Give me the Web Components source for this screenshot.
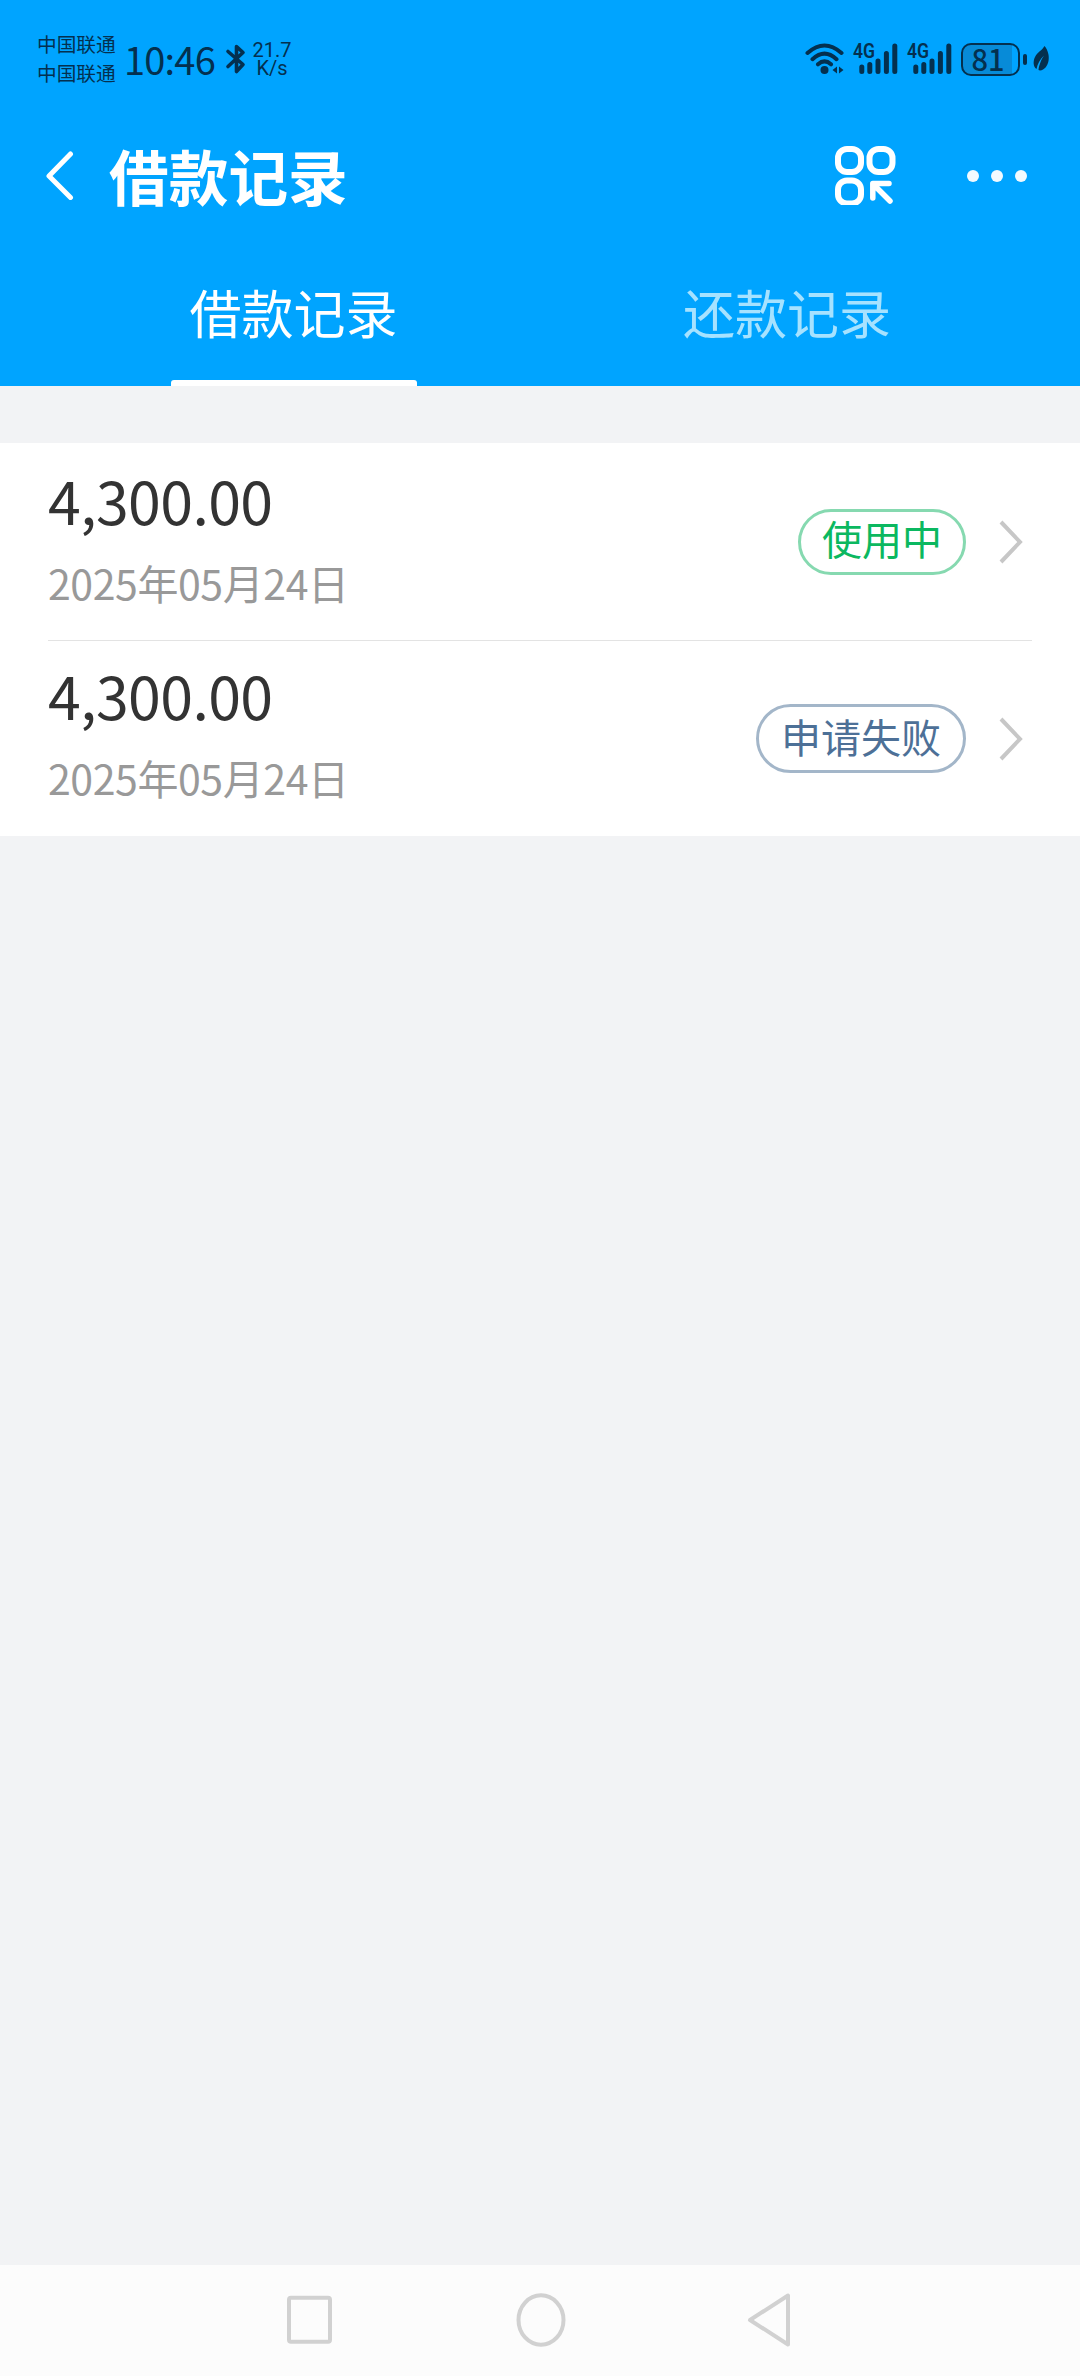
<!DOCTYPE html>
<html lang="zh-CN">
<head>
<meta charset="utf-8">
<title>借款记录</title>
<style>
html,body{margin:0;padding:0}
body{width:1080px;height:2376px;overflow:hidden;background:#f2f3f5;font-family:"Noto Sans CJK SC","Noto Sans",sans-serif}
</style>
</head>
<body>
<loan-page></loan-page>
<script>
const define = (name, html, setup) => customElements.define(name, class extends HTMLElement {
  constructor() {
    super();
    this.attachShadow({mode: 'open'}).innerHTML = html;
  }
  connectedCallback() { if (setup) setup(this, this.shadowRoot); }
});

define('signal-icon', `
<style>:host{display:block;width:54px;height:34px}svg{display:block;overflow:visible}</style>
<svg width="54" height="34" viewBox="0 0 54 34">
  <text x="0" y="16" font-family="Roboto" font-weight="600" font-size="20" textLength="22" lengthAdjust="spacingAndGlyphs" fill="#04304f">4G</text>
  <g stroke="#04304f" stroke-width="5" stroke-linecap="round"><path d="M8.800 25V29.500M16.800 22.500V29.500M25 19V29.500M33.400 11.500V29.500M41.800 4V29.500"/></g>
</svg>`);

define('wifi-icon', `
<style>:host{display:block;width:40px;height:34px}svg{display:block}</style>
<svg width="40" height="34" viewBox="0 0 40 34" fill="none" stroke="#04304f" stroke-width="4" stroke-linecap="round">
  <path d="M2.500 11Q19.500-4 36.500 11M7.500 17.200Q19.500 6 31.500 17.200M13 22.300Q19.500 16.500 26 22.300"/>
  <circle cx="19.500" cy="28" r="4" fill="#04304f" stroke="none"/>
  <path d="M32 24.500v7l-4.500-3.500zM34 24.500v7l4.500-3.500z" fill="#04304f" stroke="none"/>
</svg>`);

define('battery-icon', `
<style>
:host{display:flex;align-items:center;width:67px;height:33px}
.cell{box-sizing:border-box;width:59px;height:33px;border:2.500px solid #04304f;border-radius:10px;display:flex;align-items:center;justify-content:center;padding:0 5px 2px 0;font-size:29px;font-weight:500;line-height:28px;color:#04304f;background:linear-gradient(90deg,#078bd8 49px,transparent 49px)}
.nub{width:4px;height:11px;border-radius:2px;background:#04304f;margin-left:3px}
</style><div class="cell"><slot></slot></div><div class="nub"></div>`);

define('status-bar', `
<style>
:host{display:flex;height:118px;align-items:center;color:#04304f;box-sizing:border-box;padding-left:37px}
.carriers{width:87px;font-size:19.700px;line-height:29px;padding-bottom:2px}
.time{width:98px;font-size:38px;line-height:50px;letter-spacing:-.8px}
.bt{width:26px;height:34px;display:block}
.speed{width:48px;font-family:Roboto,sans-serif;font-size:20px;line-height:18px;text-align:center}
.right{margin-left:auto;display:flex;align-items:center;padding-right:30px}
wifi-icon{margin-right:8px}
battery-icon{margin-right:5px}
svg{display:block}
</style>
<div class="carriers"><div>中国联通</div><div>中国联通</div></div>
<div class="time">10:46</div>
<svg class="bt" viewBox="0 0 26 34" fill="none" stroke="#04304f" stroke-width="3.600" stroke-linejoin="round" stroke-linecap="round"><path d="M6 9.500L21 22.500L14.500 29.500V4.500L21 10.500L6 24.500"/></svg>
<div class="speed"><div>21.7</div><div>K/s</div></div>
<div class="right">
  <wifi-icon></wifi-icon><signal-icon></signal-icon><signal-icon></signal-icon>
  <battery-icon>81</battery-icon>
  <svg width="17" height="26" viewBox="0 0 17 26"><path d="M11.500 0C15 4 16.500 10 15.500 15C14.500 20 11.500 24 7 24.500L5.500 24C6 19 8.500 13 11 9.500C7 13 4.500 18 3.500 23C0 20.500 0 15 2 11C4.500 6 9 4.500 11.500 0Z" fill="#04304f"/></svg>
</div>`);

define('title-bar', `
<style>
:host{display:flex;height:112px;align-items:center;color:#fff;box-sizing:border-box;padding:0 53px 0 44px}
h1{margin:0 0 0 34px;padding-top:1px;font-size:59.700px;line-height:70px;font-weight:700}
svg{display:block}
.scan{margin-left:auto}
.more{display:flex;gap:12px;margin-left:71px;padding-top:4px}
.more i{width:12px;height:12px;border-radius:50%;background:#f2faff}
</style>
<svg width="31" height="52" viewBox="0 0 31 52" fill="none" stroke="#fff" stroke-width="5" stroke-linecap="round" stroke-linejoin="round"><path d="M26.500 6L5 28L26.500 49.500"/></svg>
<h1><slot></slot></h1>
<svg class="scan" width="62" height="62" viewBox="0 0 62 62" fill="none" stroke="#fff" stroke-width="6" stroke-linecap="round" stroke-linejoin="round">
  <rect x="4" y="6" width="23" height="23" rx="9"/><rect x="35.500" y="6" width="23" height="23" rx="9"/><rect x="4" y="37.500" width="23" height="23" rx="9"/>
  <path stroke-width="5.500" d="M38.800 55V40.500H55M40 42L56 58"/>
</svg>
<div class="more"><i></i><i></i><i></i></div>`);

define('tab-item', `
<style>
:host{flex:1;display:flex;flex-direction:column;align-items:center;color:#a6e2ff;font-size:52px;line-height:62px;padding-top:51px}
:host([active]){color:#fff}
span{padding-left:2px}
:host([active]) span{padding:0 1px 0 0}
i{margin-top:auto;width:246px;height:6px;border-radius:3px 3px 0 0}
:host([active]) i{background:#fff}
</style><span><slot></slot></span><i></i>`);

define('tab-strip', `
<style>:host{display:flex;height:156px;box-sizing:border-box;padding:0 48px}</style><slot></slot>`);

define('status-badge', `
<style>
:host{display:flex;box-sizing:border-box;align-items:center;justify-content:center;height:66px;width:168px;border:3px solid #86d9b0;border-radius:35px;color:#0bb860;font-size:40px;line-height:50px;padding-bottom:9px}
:host([kind=failed]){height:69px;width:210px;border-color:#a3b6c9;color:#4d7097;padding-bottom:6px}
</style><slot></slot>`);

define('loan-row', `
<style>
:host{display:flex;box-sizing:border-box;height:195px;margin:0 48px;padding-top:25px}
.info{display:flex;flex-direction:column;gap:27px;padding-top:2px}
.amount{font-size:59px;line-height:60px;color:#333;letter-spacing:-.6px}
.date{font-size:41px;line-height:50px;color:#999;letter-spacing:-.4px}
.side{margin-left:auto;height:148px;display:flex;align-items:center;padding-right:9px}
:host(:not([slot])) .side{height:151px}
svg{display:block;margin-left:33px}
</style>
<div class="info"><div class="amount"></div><div class="date"></div></div>
<div class="side"><slot></slot>
<svg width="24" height="46" viewBox="0 0 24 46" fill="none" stroke="#c7c7c7" stroke-width="4"><path d="M2 3L21 23L2 43"/></svg></div>`,
(el, root) => {
  root.querySelector('.amount').textContent = el.getAttribute('amount');
  root.querySelector('.date').textContent = el.getAttribute('date');
});

define('loan-list', `
<style>
:host{display:block;background:#fff;height:393px;margin-top:57px}
hr{border:0;height:1px;background:#e3e3e3;margin:2px 48px -3px}
</style><slot name="first"></slot><hr><slot></slot>`);

define('nav-bar', `
<style>:host{display:flex;height:111px;background:#fcfcfc;margin-top:auto;box-sizing:border-box;padding:30px 287px 0;justify-content:space-between;align-items:flex-start}svg{display:block}</style>
<svg width="45" height="60" fill="none" stroke="#d1d1d1" stroke-width="4"><rect x="2" y="8" width="41" height="44" rx="2" transform="translate(0,-.2)"/></svg>
<svg width="50" height="60" fill="none" stroke="#d1d1d1" stroke-width="4" style="margin-left:2px"><ellipse cx="25" cy="30" rx="22.500" ry="24.700"/></svg>
<svg width="46" height="60" fill="none" stroke="#d1d1d1" stroke-width="4" stroke-linejoin="round"><path d="M41 5.500V54.500L3 30Z"/></svg>`);

define('loan-page', `
<style>
:host{display:flex;flex-direction:column;width:1080px;height:2376px;background:#f2f3f5}
header{background:#00a4ff}
nav-bar{padding-top:25px}
</style>
<header>
  <status-bar></status-bar>
  <title-bar>借款记录</title-bar>
  <tab-strip><tab-item active>借款记录</tab-item><tab-item>还款记录</tab-item></tab-strip>
</header>
<loan-list>
  <loan-row slot="first" amount="4,300.00" date="2025年05月24日"><status-badge>使用中</status-badge></loan-row>
  <loan-row amount="4,300.00" date="2025年05月24日"><status-badge kind="failed">申请失败</status-badge></loan-row>
</loan-list>
<nav-bar></nav-bar>`);
</script>
</body>
</html>
